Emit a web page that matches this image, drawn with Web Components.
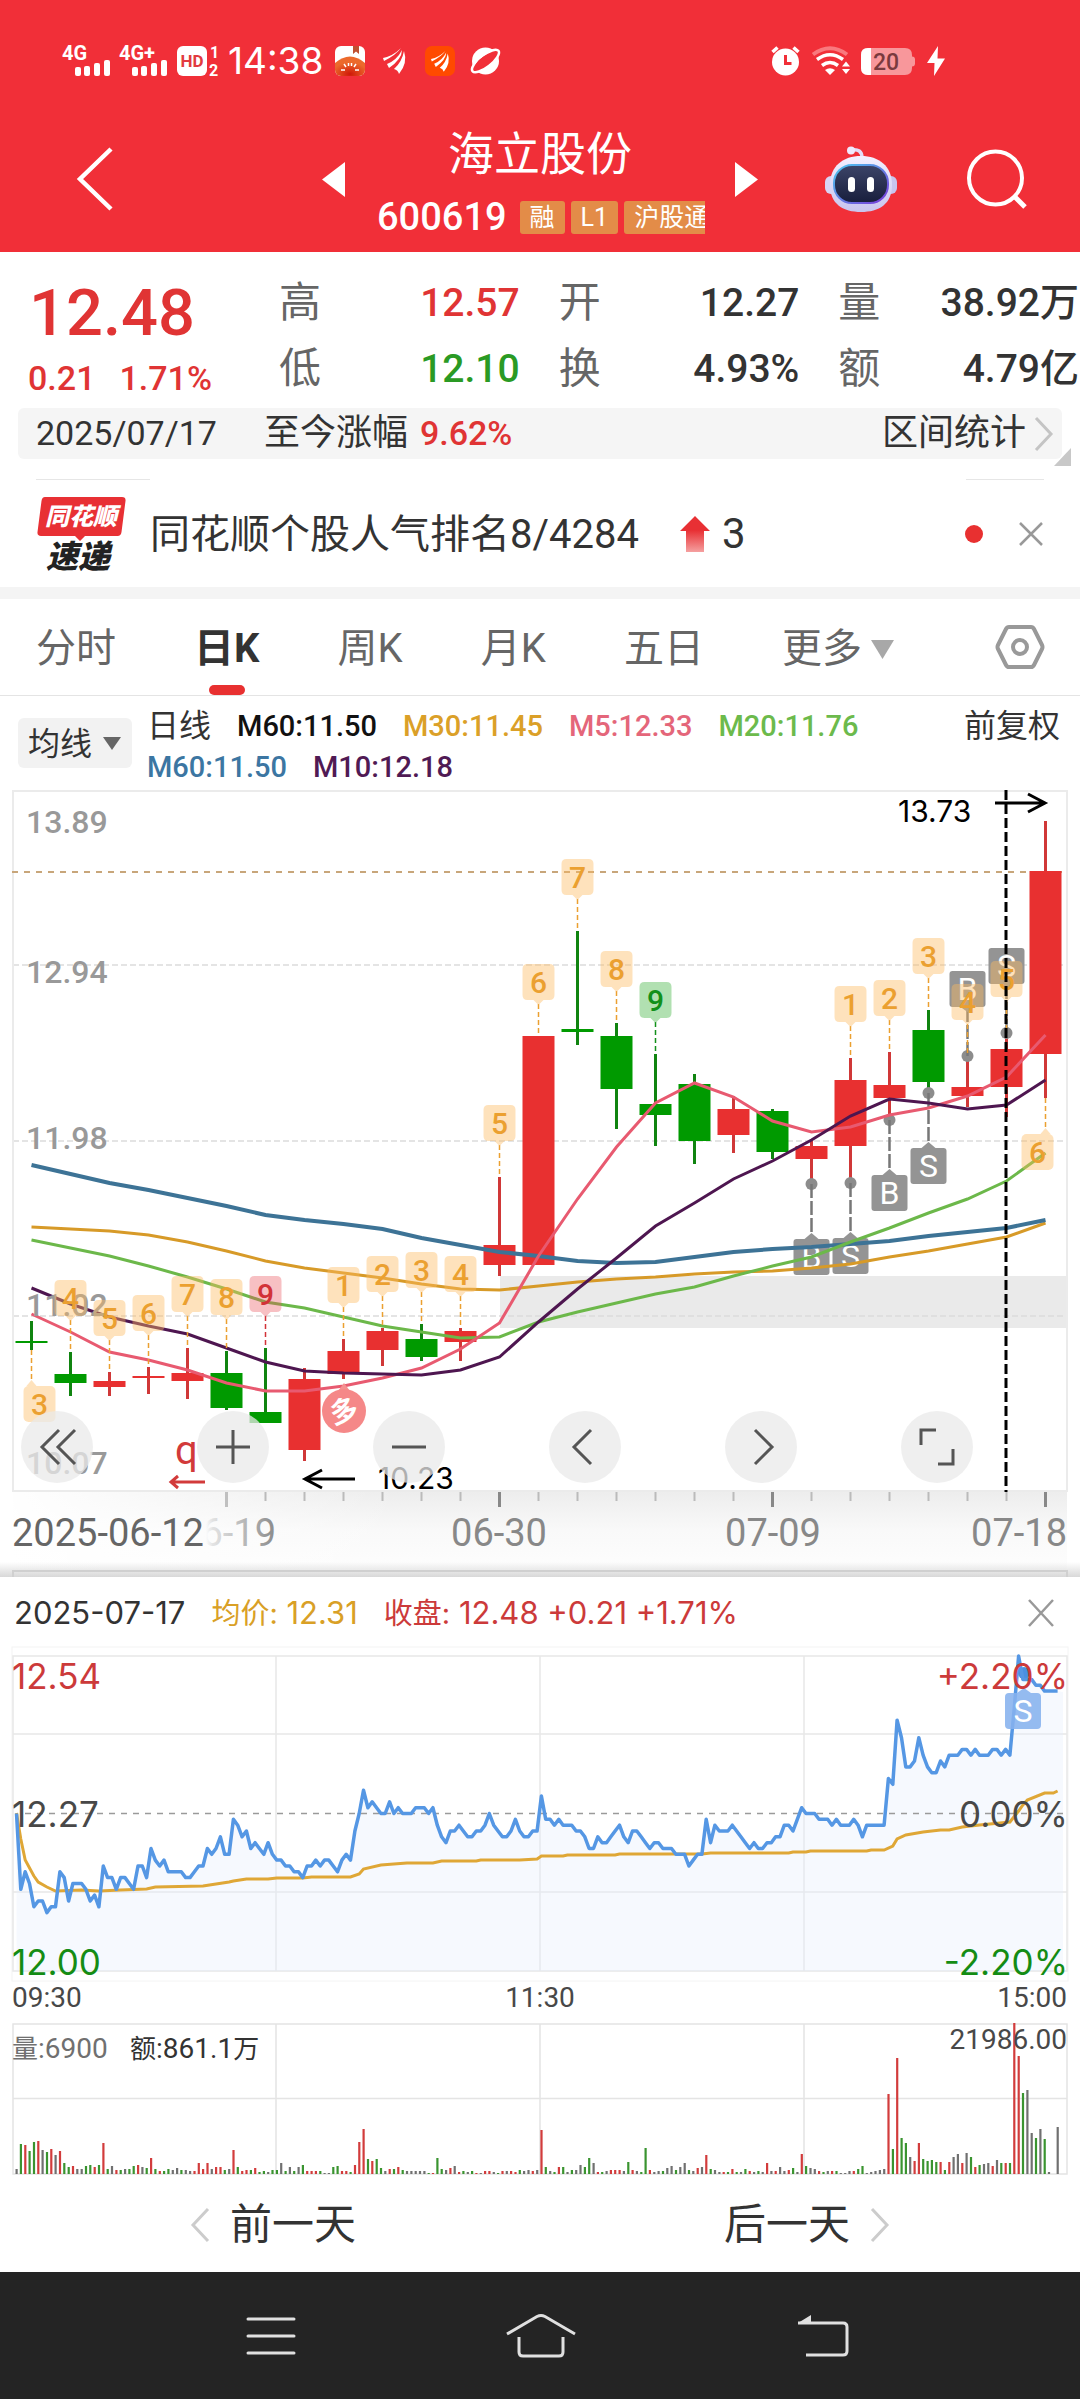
<!DOCTYPE html>
<html lang="zh-CN">
<head>
<meta charset="utf-8">
<meta name="viewport" content="width=device-width, initial-scale=1">
<title>海立股份 600619</title>
<style>
  html, body { margin: 0; padding: 0; background: #fff; }
  body {
    font-family: Roboto, "Noto Sans CJK SC", sans-serif;
    font-size: 34px;
    color: #333;
  }
</style>
</head>
<body>
<stock-app></stock-app>

<script>
const BASE = `
  :host { display: block; box-sizing: border-box; }
  *, *::before, *::after { box-sizing: border-box; }
  button, select { margin: 0; padding: 0; border: 0; background: none; font: inherit; color: inherit; }
  svg { display: block; overflow: visible; }
  svg text { font-family: Roboto, "Noto Sans CJK SC", sans-serif; }
  p, h1, dl, dt, dd { margin: 0; padding: 0; font-weight: 400; }
  .up { color: #e03434; }
  .down { color: #2a9a24; }
`;

function define(name, css, html) {
  customElements.define(name, class extends HTMLElement {
    constructor() {
      super();
      this.attachShadow({ mode: 'open' }).innerHTML =
        `<style>${BASE}${css}</style>${typeof html === 'function' ? html(this) : html}`;
    }
  });
}

/* ---------- status bar ---------- */
define('status-bar', `
  :host { display: flex; align-items: center; justify-content: space-between;
          height: 122px; padding: 0 135px 0 62px; color: #fff; }
  .side { display: flex; align-items: center; }
  .clock { font: 400 37px/40px Inter, sans-serif; margin: 0 12px 0 7px; }
`, `
  <div class="side">
    <svg width="50" height="40" viewBox="0 -4 50 40" fill="#fff">
      <text x="0" y="15" font-size="20" font-weight="700">4G</text>
      <rect x="13" y="22" width="6" height="9" rx="2"/><rect x="22" y="21" width="6" height="10" rx="2"/>
      <rect x="32" y="18" width="6" height="13" rx="2"/><rect x="42" y="15" width="6" height="16" rx="2"/>
    </svg>
    <svg width="50" height="40" viewBox="0 -4 50 40" fill="#fff" style="margin-left:7px">
      <text x="0" y="15" font-size="20" font-weight="700">4G+</text>
      <rect x="13" y="22" width="6" height="9" rx="2"/><rect x="22" y="21" width="6" height="10" rx="2"/>
      <rect x="32" y="18" width="6" height="13" rx="2"/><rect x="42" y="15" width="6" height="16" rx="2"/>
    </svg>
    <svg width="44" height="40" viewBox="0 -4 44 40" style="margin-left:8px">
      <rect x="0" y="1" width="30" height="30" rx="6" fill="#fff"/>
      <text x="15" y="22" font-size="17" font-weight="700" fill="#e23a40" text-anchor="middle">HD</text>
      <text x="33" y="13" font-size="16" font-weight="700" fill="#fff">1</text>
      <text x="32" y="31" font-size="16" font-weight="700" fill="#fff">2</text>
    </svg>
    <span class="clock">14:38</span>
    <svg width="30" height="30" viewBox="0 0 30 30">
      <defs>
        <clipPath id="app"><rect width="30" height="30" rx="6"/></clipPath>
        <radialGradient id="sun" cx="50%" cy="90%" r="60%"><stop offset="0" stop-color="#d01808"/><stop offset="1" stop-color="#ec6a2c"/></radialGradient>
      </defs>
      <g clip-path="url(#app)">
        <rect width="30" height="30" fill="#fff"/>
        <path d="M18 0h6v8l-3-2.500-3 2.500z" fill="#c05030"/>
        <path d="M0 17q15-13 30 0v13H0z" fill="url(#sun)"/>
        <path d="M6 24h4M20 24h4M9 18l2 3M21 18l-2 3M13.500 17v3M16.500 17v3" stroke="#fff" stroke-width="1.500"/>
      </g>
    </svg>
    <svg width="24" height="26" viewBox="0 0 24 26" fill="#fff" style="margin-left:18px">
      <path d="M0 10Q10 8 18 0Q13 7 1 13zM4 16Q14 12 19 2Q19 11 6 20zM11 21Q19 14 21 3Q25 15 16 26Q15 22 11 21z"/>
    </svg>
    <svg width="30" height="30" viewBox="0 0 30 30" style="margin-left:18px">
      <rect width="30" height="30" rx="7" fill="#ff4a00"/>
      <path transform="translate(6 5) scale(.8)" fill="#fff" d="M0 10Q10 8 18 0Q13 7 1 13zM4 16Q14 12 19 2Q19 11 6 20zM11 21Q19 14 21 3Q25 15 16 26Q15 22 11 21z"/>
    </svg>
    <svg width="31" height="28" viewBox="0 0 31 28" style="margin-left:15px">
      <circle cx="15.500" cy="14" r="13.500" fill="#fff"/>
      <ellipse cx="15.500" cy="14" rx="16.500" ry="6" transform="rotate(-38 15.500 14)" fill="#f12f38" stroke="#fff" stroke-width="2.500"/>
      <path d="M5.500 17.500Q12 7 24.500 6Q19 20 7.500 22z" fill="#f12f38"/>
    </svg>
  </div>
  <div class="side">
    <svg width="29" height="30" viewBox="0 0 29 30">
      <circle cx="14.500" cy="16" r="13.500" fill="#fff"/>
      <path d="M1.500 6L6.500 1.500M27.500 6L22.500 1.500" stroke="#fff" stroke-width="3.500"/>
      <path d="M14.500 9v8.500h6" fill="none" stroke="#f12f38" stroke-width="3"/>
    </svg>
    <svg width="38" height="28" viewBox="0 0 38 28" fill="none" style="margin-left:12px">
      <path d="M1 7.500Q18 -5 35 7.500" stroke="#f9797e" stroke-width="4"/>
      <path d="M5 12.500Q18 3 31 12.500M10 18.500Q18 12.500 26 18.500" stroke="#fff" stroke-width="3.500"/>
      <path d="M13 23q5-3.500 10 0l-5 5z" fill="#fff"/>
      <path d="M30 19.500l4-5 4 5zM30 22l4 5 4-5z" fill="#fff"/>
    </svg>
    <svg width="54" height="27" viewBox="0 0 54 27" style="margin-left:11px">
      <path d="M7 0h37q7 0 7 7v1.500q3 0 3 3v4q0 3-3 3V20q0 7-7 7H7q-7 0-7-7V7q0-7 7-7z" fill="#f8979b"/>
      <path d="M7 0h3v27H7q-7 0-7-7V7q0-7 7-7z" fill="#fff"/>
      <text x="25" y="22" font-size="23" font-weight="500" fill="#7a3a3e" text-anchor="middle">20</text>
    </svg>
    <svg width="18" height="30" viewBox="0 0 18 30" style="margin-left:12px"><path d="M11 0L0 17h7.500L7 30 18 12.500h-7.500z" fill="#fff"/></svg>
  </div>
`);

/* ---------- title bar ---------- */
define('title-bar', `
  :host { display: grid; grid-template-columns: 1fr auto 1fr; height: 130px;
          padding: 0 53px; color: #fff; }
  .left, .right, .mid { display: flex; align-items: flex-start; }
  .left { padding-left: 24px; }
  .right { justify-content: flex-end; gap: 70px; }
  .mid { gap: 30px; }
  button { height: 114px; display: flex; align-items: center; }
  .name { width: 330px; text-align: center; }
  h1 { font-size: 46px; line-height: 64px; }
  .code { display: flex; align-items: center; height: 62px; overflow: hidden; gap: 6px; padding-left: 2px; }
  .code b { font-size: 38px; font-weight: 500; margin-right: 7px; }
  .tag { flex: none; background: #e38c48; border-radius: 3px; font-size: 25px; line-height: 33px; padding: 0 10px; }
`, `
  <div class="left">
    <button aria-label="返回"><svg width="36" height="64" viewBox="0 0 36 64"><path d="M34 2L3 32l31 30" fill="none" stroke="#fff" stroke-width="4.500"/></svg></button>
  </div>
  <div class="mid">
    <button aria-label="上一只"><svg width="23" height="35" viewBox="0 0 23 35"><path d="M23 0v35L0 17.500z" fill="#fff"/></svg></button>
    <div class="name">
      <h1>海立股份</h1>
      <div class="code"><b>600619</b><span class="tag">融</span><span class="tag">L1</span><span class="tag">沪股通</span></div>
    </div>
    <button aria-label="下一只"><svg width="23" height="35" viewBox="0 0 23 35"><path d="M0 0v35l23-17.500z" fill="#fff"/></svg></button>
  </div>
  <div class="right">
    <button aria-label="智能助手">
      <svg width="72" height="67" viewBox="0 0 72 67">
        <defs>
          <linearGradient id="h" x1="0" y1="0" x2="0" y2="1"><stop offset="0" stop-color="#f4f0ff"/><stop offset="1" stop-color="#c8c4ee"/></linearGradient>
          <linearGradient id="e" x1="0" y1="0" x2="1" y2="1"><stop offset="0" stop-color="#4cc8f0"/><stop offset="1" stop-color="#7838d8"/></linearGradient>
          <linearGradient id="f" x1="0" y1="0" x2="0" y2="1"><stop offset="0" stop-color="#3c4468"/><stop offset="1" stop-color="#181e3c"/></linearGradient>
        </defs>
        <path d="M26 4q11-2 11 8" fill="none" stroke="#e4dcf8" stroke-width="3.500"/><circle cx="26" cy="4.500" r="4" fill="#efe8fc"/>
        <rect x="0" y="30" width="12" height="18" rx="6" fill="#d8d4f4"/><rect x="60" y="30" width="12" height="18" rx="6" fill="#c8c4ee"/>
        <path d="M36 10c18 0 31 10 31 29s-13 27-31 27S5 58 5 39 18 10 36 10z" fill="url(#h)"/>
        <rect x="9" y="19" width="54" height="38" rx="18" fill="url(#f)" stroke="url(#e)" stroke-width="2"/>
        <rect x="23" y="31" width="7" height="15" rx="3.500" fill="#fff"/><rect x="42" y="31" width="7" height="15" rx="3.500" fill="#fff"/>
      </svg>
    </button>
    <button aria-label="搜索"><svg width="60" height="60" viewBox="0 0 60 60" fill="none" stroke="#fff"><circle cx="28.500" cy="29" r="26.500" stroke-width="4"/><path d="M48 48l10 10" stroke-width="5"/></svg></button>
  </div>
`);

/* ---------- quote figures ---------- */
define('quote-panel', `
  :host { display: grid; grid-template-columns: 240px 1fr 1fr 1fr; column-gap: 39px; height: 156px; padding-right: 1px; }
  .now { padding-top: 26px; text-align: center; }
  .price { font-size: 65px; line-height: 70px; font-weight: 500; padding-right: 16px; }
  .chg { font-size: 34px; line-height: 60px; font-weight: 500; display: flex; justify-content: center; gap: 24px; }
  dl { padding-top: 18px; }
  dl div { display: flex; justify-content: space-between; line-height: 66px; white-space: nowrap; }
  dt { font-size: 42px; color: #666; }
  dd { font-size: 39px; font-weight: 500; }
`, `
  <div class="now up">
    <p class="price">12.48</p>
    <p class="chg"><span>0.21</span><span>1.71%</span></p>
  </div>
  <dl><div><dt>高</dt><dd class="up">12.57</dd></div><div><dt>低</dt><dd class="down">12.10</dd></div></dl>
  <dl><div><dt>开</dt><dd>12.27</dd></div><div><dt>换</dt><dd>4.93%</dd></div></dl>
  <dl><div><dt>量</dt><dd>38.92万</dd></div><div><dt>额</dt><dd>4.79亿</dd></div></dl>
`);

define('range-bar', `
  :host { display: flex; align-items: center; position: relative; height: 51px; margin: 0 18px;
          padding: 0 8px 0 18px; background: #f5f5f5; border-radius: 6px; line-height: 51px; }
  .date { font-size: 34px; }
  .label { font-size: 36px; margin: 0 12px 0 47px; }
  .pct { font-weight: 500; }
  button { display: flex; align-items: center; gap: 8px; margin-left: auto; font-size: 36px; line-height: 51px; }
  .corner { position: absolute; right: -9px; bottom: -7px; }
`, `
  <span class="date">2025/07/17</span>
  <span class="label">至今涨幅</span><span class="up pct">9.62%</span>
  <button>区间统计<svg width="20" height="36" viewBox="0 0 20 36"><path d="M2 2l15 16L2 34" fill="none" stroke="#c4c4c4" stroke-width="3"/></svg></button>
  <svg class="corner" width="17" height="18" viewBox="0 0 17 18"><path d="M17 0v18H0z" fill="#c8c8c8"/></svg>
`);

define('news-strip', `
  .rule { display: flex; justify-content: space-between; padding: 20px 36px 0; }
  .rule i { height: 1px; background: #e6e6e6; width: 114px; }
  .rule i + i { width: 78px; }
  .row { display: flex; align-items: center; height: 107px; padding: 0 36px; }
  p { font-size: 40px; line-height: 60px; margin-left: 24px; padding-top: 3px; }
  .rank { display: flex; align-items: center; gap: 12px; font-size: 42px; margin-left: 41px; }
  .dot { width: 18px; height: 18px; border-radius: 9px; background: #e83030; margin-left: auto; }
  button { margin-left: 35px; }
`, `
  <div class="rule"><i></i><i></i></div>
  <div class="row">
    <svg width="90" height="74" viewBox="0 0 90 74">
      <path d="M9 0h77q4 0 3.500 4l-4 31q-.5 4-4 4H49l-5 5-5-5H5q-4 0-3.500-4l4-31Q6 0 9 0z" fill="#e83034"/>
      <text x="45" y="28" font-size="24" font-weight="900" font-style="italic" fill="#fff" text-anchor="middle">同花顺</text>
      <text x="42" y="71" font-size="32" font-weight="900" font-style="italic" fill="#222" text-anchor="middle">速递</text>
    </svg>
    <p>同花顺个股人气排名8/4284</p>
    <span class="rank">
      <svg width="30" height="36" viewBox="0 0 30 36"><defs><linearGradient id="a" x1="0" y1="0" x2="0" y2="1"><stop offset="0" stop-color="#e83034"/><stop offset=".4" stop-color="#e83034"/><stop offset="1" stop-color="#f5a0a0"/></linearGradient></defs><path d="M15 0l15 15h-6v21H6V15H0z" fill="url(#a)"/></svg>3</span>
    <span class="dot"></span>
    <button aria-label="关闭"><svg width="26" height="26" viewBox="0 0 26 26"><path d="M2 2l22 22M24 2L2 24" stroke="#999" stroke-width="2.500"/></svg></button>
  </div>
`);

/* ---------- period tabs ---------- */
define('period-tabs', `
  :host { display: flex; align-items: stretch; height: 109px; border-top: 12px solid #f4f4f4;
          border-bottom: 1px solid #e4e4e4; padding: 0 36px; }
  nav { display: flex; justify-content: space-between; flex: 1; margin-right: 102px; }
  nav button { position: relative; padding-top: 4px; font-size: 40px; line-height: 60px; color: #666; display: flex; align-items: center; gap: 9px; white-space: nowrap; }
  nav button.on { color: #333; font-weight: 700; }
  nav button.on::after { content: ""; position: absolute; left: 50%; margin-left: -18px; bottom: 0; width: 36px; height: 10px; border-radius: 5px; background: #e83030; }
`, `
  <nav>
    <button>分时</button><button class="on">日K</button><button>周K</button><button>月K</button><button>五日</button>
    <button>更多<svg width="23" height="19" viewBox="0 0 23 19"><path d="M0 0h23L11.500 19z" fill="#a8a8a8"/></svg></button>
  </nav>
  <button aria-label="设置"><svg width="48" height="46" viewBox="0 0 48 46" fill="none" stroke="#999" stroke-width="4"><path d="M13 3h22q2 0 3 2l8 16q1 2 0 4l-8 16q-1 2-3 2H13q-2 0-3-2L2 25q-1-2 0-4L10 5q1-2 3-2z"/><circle cx="24" cy="23" r="7"/></svg></button>
`);

/* ---------- moving average legend ---------- */
define('ma-legend', `
  :host { display: flex; align-items: flex-start; height: 94px; padding: 10px 20px 0 18px; }
  label { position: relative; margin-top: 12px; display: flex; align-items: center; flex: none; width: 114px; height: 50px; background: #f2f2f2; border-radius: 6px; }
  select { appearance: none; width: 114px; height: 50px; padding: 2px 0 0 10px; font-size: 32px; outline: 0; }
  label svg { position: absolute; right: 11px; pointer-events: none; }
  .list { flex: 1; display: flex; flex-wrap: wrap; column-gap: 26px; padding-left: 15px; line-height: 41px; font-size: 29px; font-weight: 500; }
  .list .t, .adj { font-size: 32px; font-weight: 400; line-height: 41px; }
`, `
  <label aria-label="主图指标"><select><option>均线</option></select><svg width="18" height="13" viewBox="0 0 18 13"><path d="M0 0h18L9 13z" fill="#666"/></svg></label>
  <div class="list">
    <span class="t">日线</span>
    <span style="color:#111">M60:11.50</span><span style="color:#dba028">M30:11.45</span>
    <span style="color:#e4667a">M5:12.33</span><span style="color:#6cba4c">M20:11.76</span>
    <span style="color:#3c76a2">M60:11.50</span><span style="color:#501a54">M10:12.18</span>
  </div>
  <button class="adj">前复权</button>
`);

/* ---------- candlestick chart ---------- */
const cx = i => 31.5 + 39 * i;
// colour, high, body top, body bottom, low (vertical chart units)
const CANDLES = [
  ['g',1322,1342,1344,1351],['g',1353,1375,1384,1397],['r',1373,1382,1388,1397],['r',1368,1377,1379,1395],
  ['r',1349,1374,1382,1400],['g',1352,1374,1409,1411],['g',1349,1413,1424,1424],['r',1369,1380,1451,1462],
  ['r',1340,1352,1375,1380],['r',1329,1332,1351,1367],['g',1325,1340,1358,1362],['r',1329,1332,1343,1362],
  ['r',1178,1246,1266,1277],['r',1037,1037,1266,1266],['g',932,1030,1033,1046],['g',1024,1037,1090,1130],
  ['g',1055,1105,1116,1147],['g',1075,1085,1142,1165],['r',1097,1110,1136,1154],['g',1110,1112,1153,1160],
  ['r',1142,1147,1160,1186],['r',1059,1081,1147,1184],['r',1053,1086,1099,1121],['g',1011,1031,1083,1094],
  ['r',1057,1088,1097,1108],['r',1033,1050,1088,1118],['r',822,872,1055,1099]
];
const AVERAGES = [
  ['#d79a28',3,[1228,1230,1232,1236,1243,1252,1262,1269,1274,1279,1285,1290,1291,1287,1283,1280,1278,1275,1273,1272,1269,1265,1258,1252,1245,1238,1224]],
  ['#3d7396',4,[1166,1175,1184,1191,1199,1207,1216,1221,1225,1230,1239,1246,1253,1257,1262,1264,1263,1258,1253,1250,1248,1245,1242,1237,1233,1229,1221]],
  ['#6cb84a',3,[1241,1249,1257,1267,1278,1290,1303,1309,1318,1327,1333,1339,1338,1323,1313,1304,1295,1288,1277,1267,1258,1243,1229,1214,1200,1182,1154]],
  ['#e85a70',3,[1315,1333,1353,1361,1371,1384,1392,1392,1387,1379,1369,1350,1324,1257,1200,1148,1104,1084,1098,1122,1133,1128,1116,1109,1097,1078,1036]],
  ['#4e1650',3,[1289,1305,1318,1327,1335,1349,1363,1372,1374,1375,1376,1371,1358,1323,1290,1259,1227,1204,1180,1162,1141,1117,1100,1104,1110,1106,1081]]
];
const SEQ = [[1,4,1281],[2,5,1301],[3,6,1296],[4,7,1277],[5,8,1280],[6,9,1277,'r'],[8,1,1268],[9,2,1257],[10,3,1253],
  [11,4,1257],[12,5,1106],[13,6,965],[14,7,860],[15,8,952],[16,9,983,'g'],[21,1,987],[22,2,981],[23,3,939],[24,4,985],[25,5,962]];
const SEQ_COLOR = { r: ['rgba(232,80,90,.36)','#d23238'], g: ['rgba(70,180,70,.42)','#12901a'], o: ['rgba(252,186,96,.42)','#eba030'] };

function seqTag([i, n, top, c = 'o']) {
  const [bg, ink] = SEQ_COLOR[c], x = cx(i), end = CANDLES[i][1];
  return `<path d="M${x} ${top + 40}V${end}" stroke="${ink}" stroke-width="1.500" stroke-dasharray="5 3"/>
    <path d="M${x - 11} ${top}h22q5 0 5 5v26q0 5-5 5h-6l-5 5-5-5h-6q-5 0-5-5v-26q0-5 5-5z" fill="${bg}"/>
    <text x="${x}" y="${top + 29}" font-size="30" font-weight="500" text-anchor="middle" fill="${ink}">${n}</text>`;
}
function seqTagBelow(i, n, shift, top, from) {
  const [bg, ink] = SEQ_COLOR.o, x = cx(i), c = x + shift;
  return `<path d="M${x} ${from}V${top - 5}" stroke="${ink}" stroke-width="1.500" stroke-dasharray="5 3"/>
    <path d="M${x - 5} ${top}l5-6 5 6z" fill="${bg}"/>
    <rect x="${c - 16}" y="${top}" width="32" height="36" rx="5" fill="${bg}"/>
    <text x="${c}" y="${top + 29}" font-size="30" font-weight="500" text-anchor="middle" fill="${ink}">${n}</text>`;
}
function trade(i, letter, top, dot) {
  const x = cx(i), up = dot > top;
  return `<circle cx="${x}" cy="${dot}" r="6" fill="#8c8c8c"/>
    <path d="M${x} ${dot}V${up ? top + 38 : top - 4}" stroke="#777" stroke-width="2.500" stroke-dasharray="14 3"/>
    <path d="${up ? `M${x - 7} ${top + 36}l7 5 7-5z` : `M${x - 7} ${top}l7-6 7 6z`}" fill="#949494"/>
    <rect x="${x - 18}" y="${top}" width="36" height="36" rx="3" fill="#949494"/>
    <text x="${x}" y="${top + 29}" font-size="32" text-anchor="middle" fill="#fff">${letter}</text>`;
}
function candle([c, hi, top, bot, lo], i) {
  const x = cx(i), body = c === 'r' ? '#e83030' : '#009a00', wick = c === 'r' ? '#d03838' : '#108410';
  return `<path d="M${x} ${hi}V${lo}" stroke="${wick}" stroke-width="3"/>
    <rect x="${x - 16}" y="${top}" width="32" height="${bot - top}" fill="${body}"/>`;
}
const klineSvg = () => `
  <svg viewBox="0 791 1080 787" width="100%">
    <defs>
      <linearGradient id="strip" x1="0" y1="0" x2="0" y2="1"><stop offset="0" stop-color="#ededed"/><stop offset=".5" stop-color="#f9f9f9"/><stop offset="1" stop-color="#fdfdfd"/></linearGradient>
      <linearGradient id="veil"><stop offset="0" stop-color="#fff"/><stop offset="1" stop-color="#fff" stop-opacity="0"/></linearGradient>
      <linearGradient id="shade" x1="0" y1="0" x2="0" y2="1"><stop offset="0" stop-color="#d8d8d8" stop-opacity="0"/><stop offset="1" stop-color="#d8d8d8"/></linearGradient>
      <linearGradient id="dim" gradientUnits="userSpaceOnUse" x1="206" y1="0" x2="272" y2="0"><stop offset="0" stop-color="#999" stop-opacity="0"/><stop offset="0.100" stop-color="#999" stop-opacity=".25"/><stop offset="1" stop-color="#909090"/></linearGradient>
    </defs>
    <rect x="500" y="1277" width="567" height="52" fill="#eaeaea"/>
    <path d="M13 966H1067M13 1142H1067M13 1317H1067" stroke="#dcdcdc" stroke-width="1.500" stroke-dasharray="6 3"/>
    <rect x="13" y="792" width="1054" height="700" fill="none" stroke="#ebebeb" stroke-width="2"/>
    <path d="M12 873H1063" stroke="#c8a67a" stroke-width="2" stroke-dasharray="6 6"/>
    <rect x="13" y="1493" width="1054" height="77" fill="url(#strip)"/>
    <rect x="0" y="1493" width="400" height="77" fill="url(#veil)"/>
    ${[...Array(22)].map((_, k) => k + 5).map(i => i % 7 === 5
      ? `<path d="M${cx(i)} 1493V1508" stroke="${i === 5 ? '#c0c0c0' : '#888'}" stroke-width="3"/>`
      : `<path d="M${cx(i)} 1493V1502" stroke="#bbb" stroke-width="2"/>`).join('')}
    ${CANDLES.map(candle).join('')}
    ${trade(20,'B',1240,1185)}${trade(21,'S',1239,1184)}${trade(22,'B',1176,1121)}${trade(23,'S',1149,1094)}${trade(24,'B',972,1057)}${trade(25,'S',949,1034)}
    ${AVERAGES.map(([c, w, ys]) => `<polyline fill="none" stroke="${c}" stroke-width="${w}" points="${ys.map((y, i) => cx(i) + ',' + y).join(' ')}"/>`).join('')}
    <g font-size="32" font-weight="500" fill="#999">
      <text x="26" y="834">13.89</text><text x="26" y="984">12.94</text><text x="26" y="1150">11.98</text>
      <text x="26" y="1317">11.02</text><text x="26" y="1475">10.07</text>
    </g>
    ${SEQ.map(seqTag).join('')}${seqTagBelow(0, 3, 8, 1387, 1351)}${seqTagBelow(26, 6, -8, 1135, 1099)}
    <path d="M344 1384l6 8h-12z" fill="#f59090"/><circle cx="344" cy="1412" r="22" fill="#f58888"/>
    <text x="344" y="1422" font-size="28" font-weight="700" fill="#fff" text-anchor="middle" transform="rotate(-16 344 1412)">多</text>
    <g fill="none" stroke="#000" stroke-width="3"><path d="M995 804H1044M1028 795l17 9-17 9M355 1480H305M322 1471l-17 9 17 9"/>
      <path d="M1006 791V1493" stroke-dasharray="10 4"/></g>
    <path d="M205 1483H171M178 1477l-7 6 7 6" fill="none" stroke="#d23a3a" stroke-width="3"/>
    <text x="175" y="1465" font-size="40" fill="#d23a3a">q</text>
    <g font-size="30" fill="#000"><text class="n" x="898" y="823">13.73</text><text class="n" x="378" y="1490">10.23</text></g>
    <g font-size="38" fill="#888">
      <text x="12" y="1547" fill="#666">2025-06-12</text><text x="276" y="1547" text-anchor="end" fill="url(#dim)">06-19</text>
      <text x="499" y="1547" text-anchor="middle">06-30</text><text x="773" y="1547" text-anchor="middle">07-09</text><text x="1067" y="1547" text-anchor="end">07-18</text>
    </g>
    <rect x="0" y="1563" width="1080" height="15" fill="url(#shade)"/>
    <path d="M13 1578V1572H1067V1578" fill="none" stroke="#d0d0d0" stroke-width="2"/>
  </svg>`;
define('kline-chart', `
  :host { position: relative; }
  svg text.n { font-family: Inter, sans-serif; }
  .tools { position: absolute; left: 0; right: 0; bottom: 94px; display: flex; justify-content: space-between; padding: 0 107px 0 21px; }
  .tools button { width: 72px; height: 72px; border-radius: 36px; background: rgba(233,233,233,.75); display: flex; align-items: center; justify-content: center; }
  .tools path { fill: none; stroke: #555; stroke-width: 3; }
`, () => klineSvg() + `
  <div class="tools">
    <button aria-label="最早"><svg width="40" height="40" viewBox="0 0 40 40"><path d="M22 3L5 20l17 17M38 3L21 20l17 17"/></svg></button>
    <button aria-label="放大"><svg width="40" height="40" viewBox="0 0 40 40"><path d="M3 20h34M20 3v34"/></svg></button>
    <button aria-label="缩小"><svg width="40" height="40" viewBox="0 0 40 40"><path d="M3 20h34"/></svg></button>
    <button aria-label="向左"><svg width="40" height="40" viewBox="0 0 40 40"><path d="M26 3L9 20l17 17"/></svg></button>
    <button aria-label="向右"><svg width="40" height="40" viewBox="0 0 40 40"><path d="M14 3l17 17-17 17"/></svg></button>
    <button aria-label="全屏"><svg width="40" height="40" viewBox="0 0 40 40"><path d="M4 18V3h15M36 22v15H21"/></svg></button>
  </div>`);

/* ---------- intraday panel ---------- */
const mx = m => (16.5 + 4.338 * m).toFixed(1);
// last price per minute, in cents away from the previous close
const TICKS = [0,-13,-10,-12,-16,-15,-15,-17,-16,-16,-10,-11,-15,-12,-12,-12,-13,-15,-14,-16,
  -9,-11,-11,-13,-11,-11,-12,-13,-9,-9,-11,-6,-8,-9,-8,-10,-10,-10,-10,-11,
  -11,-10,-9,-9,-6,-7,-6,-4,-7,-7,-1,-2,-4,-3,-6,-5,-6,-7,-5,-7,
  -8,-8,-9,-9,-10,-10,-11,-9,-9,-8,-9,-8,-8,-9,-10,-8,-7,-8,-3,0,
  4,1,2,1,0,0,2,0,1,0,0,0,1,1,1,0,1,-2,-4,-5,
  -3,-3,-2,-3,-4,-4,-3,-3,-2,0,-2,-3,-4,-4,-3,-1,-3,-4,-4,-3,
  -3,3,-1,-1,-2,-1,-2,-2,-2,-3,-3,-4,-6,-6,-4,-5,-5,-4,-3,-2,
  -4,-5,-3,-3,-4,-5,-6,-5,-5,-6,-6,-6,-7,-7,-7,-9,-8,-7,-7,-1,
  -5,-2,-3,-3,-3,-2,-3,-4,-5,-6,-5,-6,-6,-5,-5,-4,-4,-2,-2,-3,
  -1,1,0,0,0,-1,-1,-1,-2,-1,-2,-2,-2,-1,-2,-4,-2,-2,-2,-2,
  -2,6,5,16,13,8,8,9,13,10,8,7,7,9,8,10,10,10,11,11,
  10,11,10,10,10,11,11,10,11,10,18,27,23,23,23,22,22,21,21,21,21];
const AVG = [[0,1814],[1,1840],[2,1861],[4,1877],[5,1883],[7,1888],[9,1892],[15,1891],[19,1892],[24,1891],[30,1890],[32,1888],
  [43,1887],[49,1883],[50,1882],[53,1880],[58,1880],[60,1879],[66,1879],[68,1878],[77,1878],[79,1875],[80,1870],[84,1866],
  [90,1864],[96,1864],[98,1862],[106,1862],[107,1861],[116,1861],[120,1860],[121,1857],[126,1857],[127,1856],[138,1856],
  [139,1855],[158,1855],[160,1854],[178,1854],[179,1853],[182,1853],[183,1852],[196,1852],[197,1851],[200,1851],[202,1847],
  [203,1840],[205,1836],[209,1833],[213,1831],[215,1831],[218,1828],[222,1826],[229,1823],[231,1812],[232,1806],[233,1801],
  [237,1794],[239,1794],[240,1792]];
const VOLUME = `k5 g30 r29 g23 g32 r33 k24 g22 r25 k19 r23 g11 g7 r8 k5 k5 g8 g9 r7 g9
 r31 g5 k8 r4 g4 k5 g5 g8 r9 k7 g6 r16 g5 r3 g3 g5 k4 k6 g4 k4
 k3 r3 r11 r5 r11 k5 r7 r7 g4 k5 r24 g7 r3 r4 g4 r6 g2 g3 k2 g4
 g4 k11 g3 k7 g3 k7 g9 r3 r3 r3 g3 k1 k1 g7 g8 r3 r3 g2 r9 r32
 r45 g15 r13 g15 g6 k3 r5 g5 r7 g4 k3 k3 k3 k3 k3 g1 r1 g16 g5 k4
 r6 k8 r2 g3 k2 g3 r1 k1 r3 r3 k2 g1 r3 k3 r3 r2 g4 k3 k4 r3
 k4 r44 g7 k3 g2 r7 g7 k2 g4 k4 k9 g7 g16 k11 r2 g2 k3 r4 r4 r4
 k3 g12 r4 k3 g2 g26 r4 k2 k3 g3 k6 k8 g4 k7 k11 g4 k3 r6 k7 r19
 g5 k4 k2 r2 g2 r5 g2 k2 g5 r3 k2 g3 k2 r11 k3 r3 k7 k3 r4 g6
 k2 r20 g8 k6 k5 r3 g2 k3 r3 g3 k1 k1 k3 r3 g5 g8 k1 k2 k3 k4
 k5 r80 g25 r116 g36 g31 k17 r13 r31 g15 g13 g14 g12 r12 g4 r12 k17 k20 r11 k21
 g17 r7 g9 k10 k11 r8 k14 g11 r11 g11 r151 r118 g81 k84 k41 g36 k45 g35 k2 k0 k47`.split(/\s+/);
const VCOLOR = { r: '#d23c3c', g: '#3a9430', k: '#707070' };
const priceLine = TICKS.map((t, m) => mx(m) + ',' + (1814.5 - t * 5.83).toFixed(1)).join(' ');
const minuteSvg = () => `
  <svg viewBox="0 1648 1080 530" width="100%">
    <rect x="12" y="1648" width="1056" height="334" fill="none" stroke="#f4f4f4"/>
    <path d="M13 1657H1067V1972H13ZM13 1735H1067M13 1893H1067M276 1657V1972M540 1657V1972M804 1657V1972" fill="none" stroke="#e8e8e8" stroke-width="1.500"/>
    <polygon points="${mx(0)},1972 ${priceLine} 1063,1693 1063,1972" fill="#e4eefc" fill-opacity=".35"/>
    <path d="M25 1814.500H1067" stroke="#9a9a9a" stroke-width="1.500" stroke-dasharray="6 6"/>
    <polyline fill="none" stroke="#dfa736" stroke-width="3" points="${AVG.map(([m, y]) => mx(m) + ',' + y).join(' ')}"/>
    <circle cx="1024" cy="1674" r="6" fill="#4a90e2"/>
    <polyline fill="none" stroke="#5597e4" stroke-width="3.500" stroke-linejoin="round" points="${priceLine}"/>
    <g fill="#86b2ee" fill-opacity=".88"><path d="M1017 1694l7-5 7 5z"/><rect x="1005" y="1694" width="36" height="36" rx="4"/></g>
    <text x="1023" y="1723" font-size="32" fill="#fff" text-anchor="middle">S</text>
    <g font-size="35" fill="#484848">
      <text class="n" x="12" y="1690" fill="#cc3a3a">12.54</text><text class="n" x="12" y="1828">12.27</text><text class="n" x="12" y="1976" fill="#148c14">12.00</text>
      <g text-anchor="end"><text class="n" x="1068" y="1690" fill="#cc3a3a">+2.20%</text><text class="n" x="1068" y="1828">0.00%</text><text class="n" x="1068" y="1976" fill="#148c14">-2.20%</text></g>
    </g>
    <g font-size="28" fill="#484848">
      <text x="12" y="2008">09:30</text><text x="540" y="2008" text-anchor="middle">11:30</text><text x="1067" y="2008" text-anchor="end">15:00</text>
    </g>
    <path d="M13 2025H1067V2175H13ZM13 2099.500H1067M276 2025V2175M540 2025V2175M804 2025V2175" fill="none" stroke="#e4e4e4" stroke-width="1.500"/>
    ${VOLUME.map((v, m) => `<rect x="${(mx(m) - 1).toFixed(1)}" y="${2175 - v.slice(1)}" width="2.200" height="${v.slice(1)}" fill="${VCOLOR[v[0]]}"/>`).join('')}
    <g font-size="28"><text x="12" y="2059" fill="#707070"><tspan font-size="26">量</tspan>:6900</text>
      <text x="130" y="2059" fill="#333"><tspan font-size="26">额</tspan>:861.1<tspan font-size="26">万</tspan></text>
      <text x="1067" y="2050" fill="#484848" text-anchor="end">21986.00</text></g>
  </svg>`;
define('minute-panel', `
  :host { background: #fff; position: relative; }
  header { display: flex; align-items: center; height: 70px; padding: 2px 26px 0 14px; gap: 26px;
           font: 400 31px/40px Inter, "Noto Sans CJK SC", sans-serif; white-space: nowrap; }
  header small { font-size: 29px; }
  header button { margin-left: auto; }
  svg text.n { font-family: Inter, sans-serif; }
  .pager { display: flex; justify-content: center; gap: 368px; align-items: center; height: 95px; }
  .pager button { display: flex; align-items: center; gap: 20px; font-size: 42px; line-height: 60px; }
`, () => `
  <header>
    <span>2025-07-17</span>
    <span style="color:#d9a026"><small>均价:</small> 12.31</span>
    <span style="color:#cc3a3a"><small>收盘:</small> 12.48 +0.21 +1.71%</span>
    <button aria-label="关闭"><svg width="26" height="28" viewBox="0 0 26 28"><path d="M1 1l24 26M25 1L1 27" stroke="#999" stroke-width="2.500"/></svg></button>
  </header>
  ${minuteSvg()}
  <div class="pager">
    <button><svg width="20" height="36" viewBox="0 0 20 36"><path d="M18 2L3 18l15 16" fill="none" stroke="#ccc" stroke-width="3"/></svg>前一天</button>
    <button>后一天<svg width="20" height="36" viewBox="0 0 20 36"><path d="M2 2l15 16L2 34" fill="none" stroke="#ccc" stroke-width="3"/></svg></button>
  </div>`);

/* ---------- system navigation ---------- */
define('system-nav', `
  :host { display: flex; align-items: center; justify-content: center; gap: 206px; height: 127px; padding-left: 26px; background: #242424; }
  button { width: 76px; height: 60px; display: flex; align-items: center; justify-content: center; }
  button:first-of-type { width: 52px; }
  path { fill: none; stroke: #e0e0e0; stroke-width: 3; }
`, `
  <button aria-label="最近任务"><svg width="50" height="40" viewBox="0 0 50 40"><path d="M2 3h46M2 20h46M2 37h46" stroke-linecap="round"/></svg></button>
  <button aria-label="主页"><svg width="70" height="44" viewBox="0 0 70 44"><path d="M1 20L31 2.500q4-2 8 0L69 20M13 23v15q0 4 4 4h36q4 0 4-4V23"/></svg></button>
  <button aria-label="返回"><svg width="52" height="44" viewBox="0 0 52 44"><path d="M1 9h45q4 0 4 4v24q0 4-4 4H9"/><path d="M14 1v8H1z" style="fill:#e0e0e0;stroke:none"/></svg></button>
`);

define('stock-app', `
  .top { background: #f12f38; }
`, `
  <div class="top"><status-bar></status-bar><title-bar></title-bar></div>
  <quote-panel></quote-panel>
  <range-bar></range-bar>
  <news-strip></news-strip>
  <period-tabs></period-tabs>
  <ma-legend></ma-legend>
  <kline-chart></kline-chart>
  <minute-panel></minute-panel>
  <system-nav></system-nav>
`);
</script>
</body>
</html>
